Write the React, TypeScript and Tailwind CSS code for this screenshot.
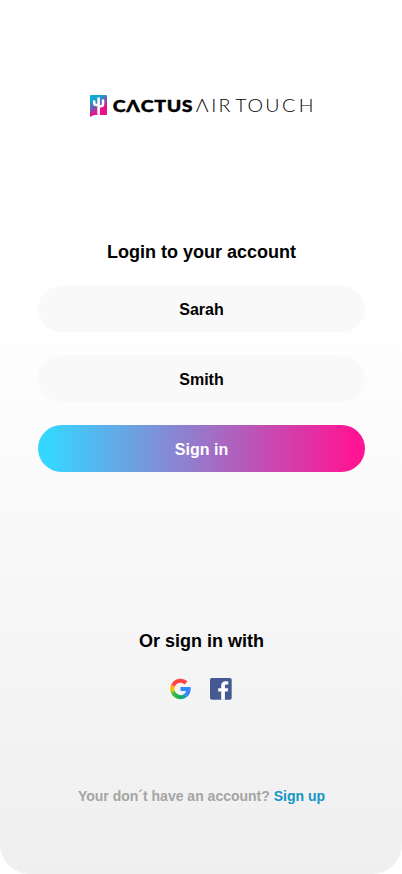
import { useState } from "react";

function Logo() {
  return (
    <svg width="226" height="24" viewBox="-1 0 226 24" role="img" aria-label="Cactus Airtouch">
      <defs>
        <linearGradient id="mark" x1="0.2" y1="0" x2="0.7" y2="1">
          <stop offset="0.2" stopColor="#12a8cf" />
          <stop offset="0.45" stopColor="#6a62b0" />
          <stop offset="0.7" stopColor="#e80f8c" />
        </linearGradient>
      </defs>
      <path d="M2 1H17Q18 1 18 2V20Q18 21 17 21H5L1 23V2Q1 1 2 1Z" fill="url(#mark)" />
      <path
        d="M9.600 4.500V20M5.200 7.500V8.800Q5.200 11 7.400 11H9.600M14 6.500V10Q14 12.200 11.800 12.200H9.600"
        fill="none"
        stroke="#fff"
        strokeWidth="2.600"
        strokeLinecap="round"
      />
      <text
        x="23.800"
        y="17.900"
        textLength="80.500"
        lengthAdjust="spacingAndGlyphs"
        strokeWidth="0.400"
        className="fill-black stroke-black font-['Lato',sans-serif] text-[17.500px] font-black tracking-[0.6px]"
      >
        CΛCTUS
      </text>
      <text
        transform="scale(1.12 1)"
        x="95.300 109.200 115.600 130.600 141.500 157.300 172.300 187.200"
        y="17.900"
        className="fill-black font-['Lato',sans-serif] text-[17.500px] font-light"
      >
        ΛIRTOUCH
      </text>
    </svg>
  );
}

function GoogleIcon() {
  return (
    <svg width="22" height="22" viewBox="3.500 2.500 43 43">
      <defs>
        <linearGradient id="left" x1="0" y1="0" x2="0" y2="1">
          <stop offset="0" stopColor="#ff7a2f" />
          <stop offset="0.4" stopColor="#ffc107" />
          <stop offset="0.65" stopColor="#e8c80a" />
          <stop offset="1" stopColor="#34b44a" />
        </linearGradient>
        <linearGradient id="bottom" x1="0" y1="0" x2="1" y2="0">
          <stop offset="0" stopColor="#5dbb2f" />
          <stop offset="0.5" stopColor="#12b05c" />
          <stop offset="1" stopColor="#1f93c8" />
        </linearGradient>
      </defs>
      <path fill="url(#left)" d="M6.300 14.700A20 20 0 0 0 6.200 33L12.700 28A12 12 0 0 1 12.900 19.500Z" />
      <path fill="#FF4645" d="m6.300 14.700 6.600 4.800C14.700 15.100 19 12 24 12c3.100 0 5.800 1.200 8 3l5.700-5.700C34 6.100 29.300 4 24 4 16.300 4 9.700 8.300 6.300 14.700z" />
      <path fill="url(#bottom)" d="M24 44c5.200 0 9.900-2 13.400-5.200l-6.200-5.200A12 12 0 0 1 12.700 28l-6.500 5C9.500 39.600 16.200 44 24 44z" />
      <path fill="#2F86FF" d="M43.600 20H24v8h11.300a12 12 0 0 1-4.100 5.600l6.200 5.200C37 39.200 44 34 44 24c0-1.300-.1-2.700-.4-4z" />
    </svg>
  );
}

function FacebookIcon() {
  return (
    <svg width="22" height="22" viewBox="0 0 22 22">
      <rect width="21.700" height="21.700" rx="1.800" fill="#475993" />
      <path
        fill="#fff"
        d="M11.200 21.700V13.600H8.200V10.300H11.200V7.700C11.200 4.900 13 3.300 15.600 3.300C16.800 3.300 17.900 3.400 18.300 3.500V6.600H16.500C15.100 6.600 14.900 7.200 14.900 8.100V10.300H18.200L17.700 13.600H14.900V21.700Z"
      />
    </svg>
  );
}

export default function App() {
  const [firstName, setFirstName] = useState("Sarah");
  const [lastName, setLastName] = useState("Smith");

  return (
    <main className="h-[874px] w-[402px] bg-white font-['Liberation_Sans',Arial,sans-serif] font-bold text-black">
      <div className="flex h-full flex-col items-center rounded-b-[30px] bg-linear-to-b from-white from-35% to-[#efefef] px-[38px] pt-[94px]">
        <Logo />

        <form
          className="mt-[121px] flex w-full flex-col items-center"
          onSubmit={(e) => e.preventDefault()}
        >
          <h1 className="pl-px text-lg leading-[26px]">Login to your account</h1>
          <input
            aria-label="First name"
            className="mt-[21px] h-[46px] w-[327px] rounded-full bg-[#f9f9f9] pt-0.5 pl-px text-center text-base outline-none"
            value={firstName}
            onChange={(e) => setFirstName(e.target.value)}
          />
          <input
            aria-label="Last name"
            className="mt-[23px] h-[47px] w-[327px] rounded-full bg-[#f9f9f9] pt-0.5 pl-px text-center text-base outline-none"
            value={lastName}
            onChange={(e) => setLastName(e.target.value)}
          />
          <button
            type="submit"
            className="mt-[23px] h-[47px] w-[327px] rounded-full bg-linear-to-r/srgb from-[#35d6ff] from-3% to-[#ff1493] to-97% pt-0.5 pl-px text-base text-white"
          >
            Sign in
          </button>
        </form>

        <h2 className="mt-[156px] pl-px text-lg leading-[26px]">Or sign in with</h2>
        <div className="mt-6 flex gap-[18px]">
          <button type="button" aria-label="Google">
            <GoogleIcon />
          </button>
          <button type="button" aria-label="Facebook">
            <FacebookIcon />
          </button>
        </div>

        <p className="mt-[86px] pl-px text-sm text-[#a5a5a5]">
          Your don´t have an account?{" "}
          <a href="#" className="text-[#1496c5]">
            Sign up
          </a>
        </p>
      </div>
    </main>
  );
}
